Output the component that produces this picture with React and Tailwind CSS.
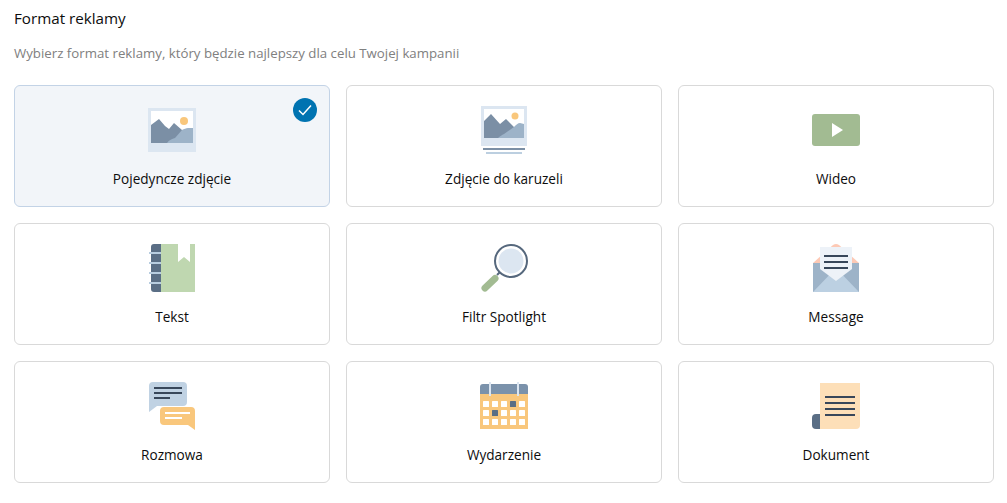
const Photo = () => (
  <svg width="48" height="52" viewBox="0 0 48 52">
    <rect x="0" y="3" width="48" height="44" fill="#dce6f1" />
    <rect x="3" y="6" width="42" height="32" fill="#fff" />
    <circle cx="36" cy="16" r="4" fill="#f9c77c" />
    <path d="M3 20 11 14 17 21 21 24 26 18 34 25 34 38 3 38Z" fill="#7b8fa5" />
    <path d="M19 38C21 35 24 34 27 33L34 25C36 24 38 23 40 23L45 23 45 38Z" fill="#9db3c8" />
  </svg>
);

const Carousel = () => (
  <svg width="48" height="52" viewBox="0 0 48 52">
    <rect x="1" y="1" width="46" height="40" fill="#dce6f1" />
    <rect x="4" y="4" width="40" height="29" fill="#fff" />
    <circle cx="35" cy="11" r="3.5" fill="#f9c77c" />
    <path d="M4 16 11 9 20 19 26 14 34 22 34 33 4 33Z" fill="#7b8fa5" />
    <path d="M18 33C20 31 22 30 24 29L34 22C36 20 38 18 40 18L44 19 44 33Z" fill="#9db3c8" />
    <rect x="3" y="43" width="42" height="2" fill="#7b8fa5" />
    <rect x="6" y="47" width="36" height="2" fill="#bccfe0" />
  </svg>
);

const Video = () => (
  <svg width="48" height="52" viewBox="0 0 48 52">
    <rect x="0" y="9" width="48" height="32" rx="3" fill="#a2bb92" />
    <path d="M20 18 31 25 20 32Z" fill="#fff" />
  </svg>
);

const Notebook = () => (
  <svg width="48" height="52" viewBox="0 0 48 52">
    <path d="M6 1H13V49H6A3 3 0 0 1 3 46V4A3 3 0 0 1 6 1Z" fill="#5a6e85" />
    <rect x="13" y="1" width="34" height="48" fill="#bfd7b0" />
    <path d="M30 1H42V19L36 14 30 19Z" fill="#fff" />
    <rect x="1" y="9" width="12" height="2" fill="#b8cde0" />
    <rect x="1" y="19" width="12" height="2" fill="#b8cde0" />
    <rect x="1" y="29" width="12" height="2" fill="#b8cde0" />
    <rect x="1" y="39" width="12" height="2" fill="#b8cde0" />
  </svg>
);

const Magnifier = () => (
  <svg width="48" height="52" viewBox="0 0 48 52">
    <circle cx="31" cy="18" r="12.5" fill="#dce6f1" />
    <circle cx="31" cy="18" r="16" fill="none" stroke="#56687d" strokeWidth="2" />
    <path d="M19.5 29.5 17 32" stroke="#56687d" strokeWidth="2" />
    <path d="M15 35.5 5 45" stroke="#a2bb92" strokeWidth="7" strokeLinecap="round" />
  </svg>
);

const Envelope = () => (
  <svg width="48" height="52" viewBox="0 0 48 52">
    <path d="M1 20 21 2Q24 0 27 2L47 20Z" fill="#fdc9b5" />
    <rect x="1" y="20" width="46" height="29" fill="#9db3c8" />
    <path d="M1 49 24 25 47 49Z" fill="#bcd0e2" />
    <path d="M8 4H40V26L24 38 8 26Z" fill="#edf2f8" />
    <rect x="12" y="12" width="24" height="2" fill="#38475a" />
    <rect x="12" y="18" width="24" height="2" fill="#38475a" />
    <rect x="12" y="24" width="24" height="2" fill="#38475a" />
  </svg>
);

const Chat = () => (
  <svg width="48" height="52" viewBox="0 0 48 52">
    <path d="M5 1H35A4 4 0 0 1 39 5V21A4 4 0 0 1 35 25H9L1 31V5A4 4 0 0 1 5 1Z" fill="#c0d2e3" />
    <rect x="6" y="6" width="28" height="2" fill="#38475a" />
    <rect x="6" y="11" width="28" height="2" fill="#38475a" />
    <rect x="6" y="16" width="16" height="2" fill="#38475a" />
    <path d="M16 26H43A4 4 0 0 1 47 30V49L40 44H16A4 4 0 0 1 12 40V30A4 4 0 0 1 16 26Z" fill="#f9c77c" />
    <rect x="17" y="31" width="25" height="2" fill="#fff" />
    <rect x="17" y="36" width="17" height="2" fill="#fff" />
  </svg>
);

const Calendar = () => {
  const xs = [3, 12, 21, 30, 39];
  const ys = [20, 29, 38];
  return (
    <svg width="48" height="52" viewBox="0 0 48 52">
      <rect x="0" y="13" width="48" height="35" fill="#f9c77c" />
      <path d="M3 3H45A3 3 0 0 1 48 6V13H0V6A3 3 0 0 1 3 3Z" fill="#7b92ab" />
      <rect x="9" y="1" width="2" height="14" fill="#dce6f1" />
      <rect x="37" y="1" width="2" height="14" fill="#dce6f1" />
      {ys.map((y, r) =>
        xs.map((x, c) => {
          const dark = (r === 0 && c === 3) || (r === 1 && c === 1);
          return <rect key={`${r}-${c}`} x={x} y={y} width="6" height="6" rx="0.5" fill={dark ? "#5a6e85" : "#fff"} />;
        })
      )}
    </svg>
  );
};

const Scroll = () => (
  <svg width="48" height="52" viewBox="0 0 48 52">
    <path d="M8 2H48V44A4 4 0 0 1 44 48H8Z" fill="#fddfb8" />
    <path d="M4 33H8V48H4A4 4 0 0 1 0 44V37A4 4 0 0 1 4 33Z" fill="#5a6e85" />
    <rect x="13" y="15" width="30" height="2" fill="#38475a" />
    <rect x="13" y="21" width="30" height="2" fill="#38475a" />
    <rect x="13" y="27" width="30" height="2" fill="#38475a" />
    <rect x="13" y="33" width="30" height="2" fill="#38475a" />
  </svg>
);

const formats = [
  { label: "Pojedyncze zdjęcie", Icon: Photo, selected: true },
  { label: "Zdjęcie do karuzeli", Icon: Carousel },
  { label: "Wideo", Icon: Video },
  { label: "Tekst", Icon: Notebook },
  { label: "Filtr Spotlight", Icon: Magnifier },
  { label: "Message", Icon: Envelope },
  { label: "Rozmowa", Icon: Chat },
  { label: "Wydarzenie", Icon: Calendar },
  { label: "Dokument", Icon: Scroll },
];

const FormatCard = ({ label, Icon, selected }) => (
  <div
    className={
      selected
        ? "relative flex h-[122px] flex-col items-center rounded-md border border-[#c3d3e6] bg-[#f2f5f9] pt-[19px]"
        : "relative flex h-[122px] flex-col items-center rounded-md border border-[#d9d9d9] bg-white pt-[19px]"
    }
  >
    <Icon />
    <span className="mt-[12px] text-[13.6px] leading-[20px] font-medium text-[#0d0d0d]">{label}</span>
    {selected && (
      <div className="absolute top-[12px] right-[12px] flex h-6 w-6 items-center justify-center rounded-full bg-[#0073b1]">
        <svg width="14" height="12" viewBox="0 0 14 12" fill="none">
          <path d="M1 6.5 5 10.5 13 1.5" stroke="#fff" strokeWidth="1.5" />
        </svg>
      </div>
    )}
  </div>
);

export default function App() {
  return (
    <div className="h-[503px] w-[1007px] bg-white pr-[13px] pl-[14px] font-['Open_Sans',sans-serif]">
      <h2 className="pt-[8px] text-[15.2px] leading-[20px] font-medium text-[#0d0d0d]">Format reklamy</h2>
      <p className="mt-[15px] text-[13.25px] leading-[20px] text-[#808080]">
        Wybierz format reklamy, który będzie najlepszy dla celu Twojej kampanii
      </p>
      <div className="mt-[22px] grid grid-cols-3 gap-4">
        {formats.map((f) => (
          <FormatCard key={f.label} {...f} />
        ))}
      </div>
    </div>
  );
}
